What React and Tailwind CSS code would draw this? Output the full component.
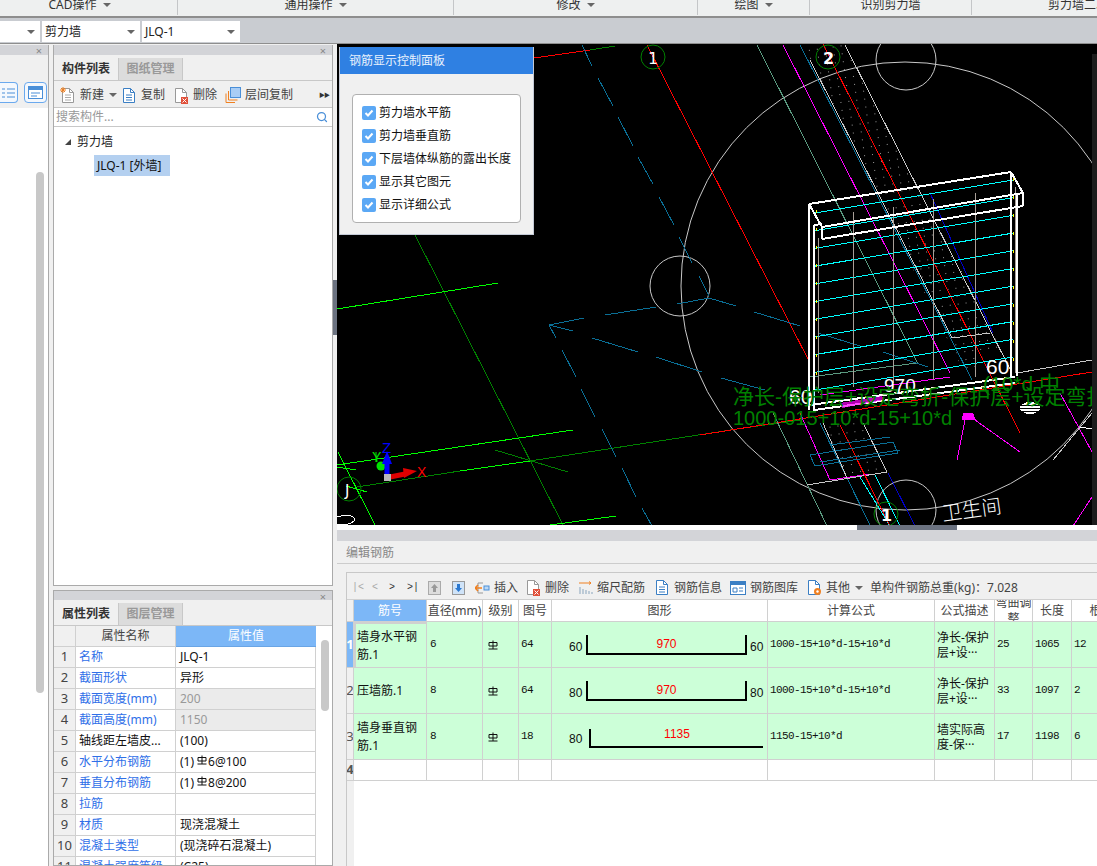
import React from "react";
import { Search } from "lucide-react";

const ribbon = [
  { label: "CAD操作", w: "w-[178px] pr-[18px]", caret: true },
  { label: "通用操作", w: "w-[276px]", caret: true },
  { label: "修改", w: "w-[244px]", caret: true },
  { label: "绘图", w: "w-[112px]", caret: true },
  { label: "识别剪力墙", w: "w-[162px]" },
  { label: "剪力墙二次编辑", w: "w-[236px]" },
];

const props = [
  ["名称", "JLQ-1"],
  ["截面形状", "异形"],
  ["截面宽度(mm)", "200", true],
  ["截面高度(mm)", "1150", true],
  ["轴线距左墙皮...", "(100)", false, true],
  ["水平分布钢筋", "6@100", false, false, true],
  ["垂直分布钢筋", "8@200", false, false, true],
  ["拉筋", ""],
  ["材质", "现浇混凝土"],
  ["混凝土类型", "(现浇碎石混凝土)"],
  ["混凝土强度等级", "(C25)"],
];

const checks = ["剪力墙水平筋", "剪力墙垂直筋", "下层墙体纵筋的露出长度", "显示其它图元", "显示详细公式"];

const tableCols = "grid grid-cols-[7px_73px_56px_36px_33px_216px_167px_60px_38px_39px_60px]";
const monoText = "font-[family-name:'Liberation_Mono','Noto_Sans_CJK_SC',monospace] text-[11px] tracking-[-0.6px]";
const cell = "border-r border-b border-[#d0d0d0] flex items-center overflow-hidden";

const rows = [
  { no: 1, name: <>墙身水平钢<br />筋.1</>, d: "6", fig: "64", l: "60", r: "60", mid: "970", formula: "1000-15+10*d-15+10*d", desc: <>净长-保护<br />层+设···</>, adj: "25", len: "1065", n: "12" },
  { no: 2, name: "压墙筋.1", d: "8", fig: "64", l: "80", r: "80", mid: "970", formula: "1000-15+10*d-15+10*d", desc: <>净长-保护<br />层+设···</>, adj: "33", len: "1097", n: "2" },
  { no: 3, name: <>墙身垂直钢<br />筋.1</>, d: "8", fig: "18", l: "80", mid: "1135", formula: "1150-15+10*d", desc: <>墙实际高<br />度-保···</>, adj: "17", len: "1198", n: "6" },
];

// canvas lines in page coordinates, [x1, y1, x2, y2, colour]
const lines = [
  [534, 58, 590, 50, "#ff0000"], [590, 50, 615, 46, "#008000"], [647, 45, 810, 363, "#ff0000"], [823, 44, 1020, 433, "#ff0000"],
  [415, 235, 563, 525, "#008000"], [337, 309, 498, 283, "#00ff00"], [337, 465, 573, 430, "#00ff00"],
  [357, 487, 460, 471, "#008000"], [460, 471, 530, 461, "#00ff00"], [530, 461, 737, 429, "#008000"], [737, 429, 800, 420, "#008000"],
  [700, 435, 1092, 372, "#ff0000"], [550, 525, 616, 516, "#00ff00"], [495, 450, 568, 472, "#008000"],
  [338, 452, 375, 525, "#00ff00"], [337, 467, 356, 470, "#00ff00"], [346, 486, 367, 492, "#00ff00"],
  [757, 45, 918, 364, "#5a9a80"], [810, 377, 917, 363, "#5a9a80"], [773, 413, 827, 526, "#5a9a80"],
  [783, 45, 950, 373, "#ff00ff"], [820, 395, 950, 377, "#ff00ff"],
  [800, 413, 830, 480, "#ff00ff"], [830, 480, 870, 474, "#ff00ff"], [800, 45, 972, 380, "#0a6f96"], [820, 423, 870, 525, "#0a6f96"],
  [810, 60, 952, 338, "#c8c8c8"], [952, 338, 990, 333, "#c8c8c8"], [845, 45, 1012, 373, "#c8c8c8"], [930, 193, 993, 333, "#0000c8"],
  [823, 423, 847, 478, "#c8c8c8"], [863, 423, 887, 472, "#c8c8c8"], [807, 485, 887, 472, "#c8c8c8"],
  [860, 477, 890, 526, "#00ffff"], [875, 475, 900, 526, "#00ffff"], [888, 473, 915, 526, "#0000c8"],
  [840, 425, 890, 526, "#ff0000"],
  [965, 420, 957, 460, "#ff00ff"], [975, 420, 1020, 452, "#ff00ff"], [1060, 393, 1092, 452, "#ff00ff"], [1092, 497, 1073, 526, "#ff00ff"],
  [1017, 373, 1092, 360, "#c8c8c8"], [1053, 460, 1092, 413, "#c8c8c8"], [1080, 427, 1092, 429, "#ffffff"],
  [810, 455, 893, 442, "#0a6f96"], [893, 442, 898, 453, "#0a6f96"], [898, 453, 815, 466, "#0a6f96"], [815, 466, 810, 455, "#0a6f96"],
  [820, 462, 900, 450, "#0a6f96"], [830, 445, 890, 437, "#0a6f96"],
];

const tealDashes = [
  [582, 45, 592, 66], [598, 78, 613, 106], [618, 117, 633, 146], [638, 157, 653, 184], [659, 197, 674, 225], [679, 237, 692, 263], [699, 276, 709, 296],
  [549, 325, 556, 338], [562, 350, 576, 377], [581, 389, 595, 417], [602, 429, 616, 457], [622, 468, 636, 497], [642, 508, 652, 526],
  [549, 325, 584, 318], [605, 315, 656, 307], [677, 304, 709, 298],
  [549, 325, 573, 331], [592, 338, 638, 352], [656, 357, 702, 372], [721, 378, 765, 390], [709, 298, 736, 306], [754, 312, 800, 326], [818, 333, 863, 347], [883, 352, 928, 367],
];

const wallTop = [
  [809, 204, 1011, 172], [809, 204, 822, 227], [1011, 172, 1023, 193], [822, 227, 1023, 193], [822, 227, 822, 239], [822, 239, 1023, 206], [1023, 193, 1023, 206],
  [814, 225, 822, 224], [809, 204, 809, 410], [814, 225, 814, 412], [1011, 172, 1011, 378], [1017, 193, 1017, 376],
  [810, 405, 1015, 377], [814, 410, 1015, 383],
];

const rebarV = [[818, 238, 393], [853, 212, 387], [893, 207, 383], [933, 199, 380], [975, 193, 377], [1015, 187, 373]];

const Caret = () => <span className="inline-block w-0 h-0 border-x-[4px] border-x-transparent border-t-[4px] border-t-[#666]" />;

const RebarMark = () => (
  <svg width="10" height="10" viewBox="0 0 10 10" className="inline-block">
    <path d="M1 2.500h8v3.500h-8zM5 0.500v8.500M0.500 9h9" fill="none" stroke="#111" strokeWidth="1" />
  </svg>
);

const DocIcon = ({ children, stroke = "#3b7fc4" }) => (
  <svg width="16" height="17" viewBox="0 0 16 17" className="shrink-0">
    <path d="M2.500 1.500h7l4 4v10h-11z" fill="#fff" stroke={stroke} />
    <path d="M9.500 1.500v4h4" fill="none" stroke={stroke} />
    {children}
  </svg>
);

const DocLines = ({ color = "#3b7fc4" }) => <path d="M5 8h6M5 10.500h6M5 13h6" stroke={color} />;

const RedX = () => (
  <g>
    <rect x="8" y="10" width="7" height="7" fill="#e0503a" />
    <path d="M9.500 11.500l4 4M13.500 11.500l-4 4" stroke="#fff" />
  </g>
);

const PanelTitle = () => (
  <div className="h-[10px] bg-[#d3d4d8] flex items-center justify-end pr-[6px] shrink-0">
    <span className="text-[#888] text-[11px] leading-none">×</span>
  </div>
);

const PanelTabs = ({ active, other }) => (
  <div className="h-[23px] mt-[3px] flex border-b border-[#c8c8c8] shrink-0">
    <div className="w-[65px] flex items-center justify-center font-bold text-[#333] border-r border-[#c8c8c8]">{active}</div>
    <div className="w-[64px] flex items-center justify-center font-bold text-[#999] bg-[#dcdcdc] border-r border-[#c8c8c8]">{other}</div>
  </div>
);

const ToolItem = ({ icon, label, caret, className = "" }) => (
  <div className={`flex items-center gap-[4px] text-[#444] ${className}`}>
    {icon}
    <span>{label}</span>
    {caret && <span className="ml-[1px] flex"><Caret /></span>}
  </div>
);

const Drawing = () => (
  <svg viewBox="337 44 760 481" className="block w-full h-full" shapeRendering="crispEdges">
    <defs>
      <pattern id="dots" width="8" height="8" patternUnits="userSpaceOnUse" patternTransform="rotate(-8)">
        <rect x="2" y="2" width="1" height="1" fill="#9a9a9a" />
      </pattern>
    </defs>
    <path d="M802 45H845L1000 345L965 375ZM823 423H863L887 472L847 478Z" fill="url(#dots)" />
    <g fill="none" stroke="#c8c8c8" shapeRendering="auto">
      <circle cx="905" cy="286" r="224" />
      <circle cx="680" cy="286" r="30" />
      <circle cx="906" cy="60" r="30" />
      <circle cx="906" cy="510" r="30" />
    </g>
    {lines.map(([x1, y1, x2, y2, c], i) => (
      <line key={i} x1={x1} y1={y1} x2={x2} y2={y2} stroke={c} strokeWidth="1" />
    ))}
    {tealDashes.map(([x1, y1, x2, y2], i) => (
      <line key={i} x1={x1} y1={y1} x2={x2} y2={y2} stroke="#0a6f96" strokeWidth="1" />
    ))}
    {Array.from({ length: 11 }, (_, i) => (
      <line key={i} x1="815" y1={213 + i * 17.7} x2="1013" y2={180 + i * 17.7} stroke="#00ffff" strokeWidth="1" />
    ))}
    {rebarV.map(([x, y1, y2]) => (
      <line key={x} x1={x} y1={y1} x2={x} y2={y2} stroke="#a89f98" strokeWidth="1" />
    ))}
    <line x1="816" y1="210" x2="816" y2="385" stroke="#ffff00" strokeDasharray="3 15" />
    <line x1="1013" y1="178" x2="1013" y2="375" stroke="#ffff00" strokeDasharray="3 15" />
    {wallTop.map(([x1, y1, x2, y2], i) => (
      <line key={i} x1={x1} y1={y1} x2={x2} y2={y2} stroke="#fff" strokeWidth="2" />
    ))}
    <path d="M963 413L973 413L976 420L962 420Z" fill="#ff00ff" />
    <path d="M840 403L882 396L884 400L842 408Z" fill="#ff00ff" opacity="0.7" />
    <ellipse cx="1030" cy="408" rx="10" ry="6" fill="#fff" />
    <path d="M1021 405H1039M1020 408H1040M1022 411H1038" stroke="#000" />
    <g fill="none" stroke="#008000" shapeRendering="auto">
      <circle cx="653" cy="57" r="12" />
      <circle cx="828" cy="57" r="12" />
      <circle cx="886" cy="514" r="12" />
      <circle cx="349" cy="489" r="12" />
    </g>
    <path d="M337 517C350 513 356 517 354 521C350 525 342 525 337 525" fill="none" stroke="#fff" />
    <g fontFamily="'DejaVu Sans', sans-serif" fill="#fff" shapeRendering="auto">
      <text x="648" y="64" fontSize="16">1</text>
      <text x="823" y="64" fontSize="16" fontWeight="bold">2</text>
      <text x="881" y="521" fontSize="16" fontWeight="bold">1</text>
      <text x="345" y="496" fontSize="15">J</text>
      <text x="884" y="392" fontSize="19" fontFamily="'Liberation Sans', sans-serif">970</text>
      <text x="986" y="374" fontSize="21" fontFamily="'Liberation Sans', sans-serif">60</text>
      <text x="789" y="404" fontSize="21" fontFamily="'Liberation Sans', sans-serif">60</text>
      <text x="0" y="0" fontSize="20" fontFamily="'Noto Sans CJK SC', sans-serif" fontWeight="300" transform="translate(943 521) rotate(-8)">卫生间</text>
    </g>
    <g fill="#008000" shapeRendering="auto" fontFamily="'Liberation Sans', 'Noto Sans CJK SC', sans-serif">
      <text x="733" y="404" fontSize="21">净长-保护层+设定弯折-保护层+设定弯折</text>
      <text x="733" y="425" fontSize="20">1000-015+10*d-15+10*d</text>
      <text x="983" y="391" fontSize="21">(10*d 中</text>
    </g>
    <g shapeRendering="auto">
      <circle cx="381" cy="466" r="4.500" fill="#00e000" />
      <path d="M376 462V452" stroke="#00e000" />
      <path d="M387 477V460" stroke="#0000ff" strokeWidth="5" />
      <path d="M382 464L387 451L392 464Z" fill="#0000ff" />
      <path d="M390 477L405 474" stroke="#e00000" strokeWidth="5" />
      <path d="M403 468L417 471L404 478Z" fill="#e00000" />
      <rect x="384" y="474" width="7" height="7" fill="#b8b8b8" />
      <text x="382" y="453" fontSize="15" fill="#0000ff" fontFamily="'Liberation Sans', sans-serif">Z</text>
      <text x="372" y="462" fontSize="14" fill="#00e000" fontFamily="'Liberation Sans', sans-serif">Y</text>
      <text x="417" y="477" fontSize="14" fill="#ff0000" fontFamily="'Liberation Sans', sans-serif">X</text>
    </g>
  </svg>
);

const ControlPanel = () => (
  <div className="absolute left-[2px] top-[3px] w-[195px] h-[188px] bg-[#f0f0f0] border-b border-x border-[#c4cad6]">
    <div className="h-[27px] bg-[#2f80e2] text-[#e8f1fd] flex items-center pl-[9px]">钢筋显示控制面板</div>
    <div className="mt-[20px] mx-[12px] h-[129px] bg-white border border-[#b0b0b0] rounded-[4px] pl-[9px] pt-[9px] flex flex-col gap-[5px]">
      {checks.map((c) => (
        <div key={c} className="flex items-center gap-[3px] h-[18px] text-[#111]">
          <span className="w-[14px] h-[14px] rounded-[2px] bg-[#5ba8f5] flex items-center justify-center">
            <svg width="10" height="10" viewBox="0 0 10 10">
              <path d="M1.500 5l2.500 2.500 4.500-5" fill="none" stroke="#fff" strokeWidth="2" />
            </svg>
          </span>
          <span>{c}</span>
        </div>
      ))}
    </div>
  </div>
);

const Shape = ({ row }) => (
  <div className="flex items-center w-full h-full relative">
    <span className="absolute left-[17px] top-[16px] text-[12px] font-[family-name:'Liberation_Sans',sans-serif] text-[#111]">{row.l}</span>
    {row.r ? (
      <>
        <div className="absolute left-[34px] top-[13px] w-[161px] h-[20px] border-x-[2px] border-b-[2px] border-black text-center text-[12px] leading-[18px] text-[#f00] font-[family-name:'Liberation_Sans',sans-serif]">{row.mid}</div>
        <span className="absolute left-[198px] top-[16px] text-[12px] font-[family-name:'Liberation_Sans',sans-serif] text-[#111]">{row.r}</span>
      </>
    ) : (
      <div className="absolute left-[37px] top-[15px] w-[174px] h-[19px] border-l-[2px] border-b-[2px] border-black text-center text-[12px] leading-[10px] text-[#f00] font-[family-name:'Liberation_Sans',sans-serif]">{row.mid}</div>
    )}
  </div>
);

const HeaderCell = ({ children, className = "" }) => (
  <div className={`${cell} justify-center text-[#444] leading-[16px] text-center ${className}`}>{children}</div>
);

const Table = () => (
  <div className="flex-1 min-w-0 overflow-hidden">
    <div className={`${tableCols} h-[22px]`}>
      <div className="bg-[#f0f0f0] border-r border-b border-[#d0d0d0]" />
      <HeaderCell className="bg-[#7cb7f7] !text-white">筋号</HeaderCell>
      <HeaderCell>直径(mm)</HeaderCell>
      <HeaderCell>级别</HeaderCell>
      <HeaderCell>图号</HeaderCell>
      <HeaderCell>图形</HeaderCell>
      <HeaderCell>计算公式</HeaderCell>
      <HeaderCell>公式描述</HeaderCell>
      <HeaderCell>弯曲调整</HeaderCell>
      <HeaderCell>长度</HeaderCell>
      <HeaderCell>根数</HeaderCell>
    </div>
    {rows.map((r) => (
      <div key={r.no} className={`${tableCols} h-[46px] text-[#111]`}>
        <div className={`${cell} justify-center text-[13px] font-bold ${r.no === 1 ? "bg-[#7cb7f7] text-white" : "bg-[#f0f0f0] text-[#555] font-normal"}`}>{r.no}</div>
        <div className={`${cell} bg-[#ccffd8] leading-[18px] ${r.no === 1 ? "border-2 border-[#808080] pl-[1px]" : "pl-[3px]"}`}><span>{r.name}</span></div>
        <div className={`${cell} bg-[#ccffd8] pl-[3px] ${monoText}`}>{r.d}</div>
        <div className={`${cell} bg-[#ccffd8] pl-[5px]`}><RebarMark /></div>
        <div className={`${cell} bg-[#ccffd8] pl-[2px] ${monoText}`}>{r.fig}</div>
        <div className={`${cell} bg-[#ccffd8]`}><Shape row={r} /></div>
        <div className={`${cell} bg-[#ccffd8] pl-[2px] ${monoText}`}>{r.formula}</div>
        <div className={`${cell} bg-[#ccffd8] pl-[2px] leading-[15px]`}><span>{r.desc}</span></div>
        <div className={`${cell} bg-[#ccffd8] pl-[2px] ${monoText}`}>{r.adj}</div>
        <div className={`${cell} bg-[#ccffd8] pl-[2px] ${monoText}`}>{r.len}</div>
        <div className={`${cell} bg-[#ccffd8] pl-[2px] ${monoText}`}>{r.n}</div>
      </div>
    ))}
    <div className={`${tableCols} h-[21px]`}>
      <div className={`${cell} justify-center text-[13px] font-bold bg-[#f0f0f0] text-[#555]`}>4</div>
      {Array.from({ length: 10 }, (_, i) => <div key={i} className={cell} />)}
    </div>
    <div className="w-[7px] h-[100px] bg-[#f0f0f0]" />
  </div>
);

export default function App() {
  return (
    <div className="w-[1097px] h-[866px] flex flex-col overflow-hidden bg-[#f0f0f0] text-[12px] font-[family-name:'Noto_Sans','Noto_Sans_CJK_SC',sans-serif]">
      {/* ribbon */}
      <div className="h-[18px] shrink-0 flex overflow-hidden bg-[#eef0f0] border-b-2 border-[#8e8e8e]">
        {ribbon.map((r) => (
          <div key={r.label} className={`${r.w} shrink-0 h-[15px] border-r border-[#c4c6c8] flex items-start justify-center gap-[6px] text-[#333] last:border-r-0`}>
            <span className="leading-[10px] whitespace-nowrap">{r.label}</span>
            {r.caret && <span className="mt-[3px] flex"><Caret /></span>}
          </div>
        ))}
      </div>
      {/* combo bar */}
      <div className="h-[26px] shrink-0 bg-[#c9ccd1] border-b border-[#8e8e8e] flex items-start pt-[3px] gap-[2px]">
        {[["", "w-[40px]"], ["剪力墙", "w-[98px]"], ["JLQ-1", "w-[98px]"]].map(([t, w]) => (
          <div key={w + t} className={`${w} h-[21px] bg-white flex items-center justify-between pl-[3px] pr-[5px] text-[#222]`}>
            <span>{t}</span>
            <Caret />
          </div>
        ))}
      </div>
      <div className="flex flex-1 min-h-0">
        {/* left panels */}
        <div className="w-[337px] shrink-0 flex pt-px">
          <div className="w-[49px] shrink-0 border-r border-[#aaa] bg-white flex flex-col">
            <PanelTitle />
            <div className="h-[53px] bg-[#f0f0f0] flex items-end pb-[5px] gap-[6px] shrink-0">
              <div className="w-[18px] h-[21px] rounded-r-[4px] border border-l-0 border-[#6aa9ee] bg-[#f4f8fd] flex items-center justify-center">
                <svg width="14" height="12" viewBox="0 0 14 12"><path d="M0 2h3M5 2h8M0 6h3M5 6h8M0 10h3M5 10h8" stroke="#4a8fd8" /></svg>
              </div>
              <div className="w-[23px] h-[21px] rounded-[4px] border border-[#6aa9ee] bg-[#f4f8fd] flex items-center justify-center">
                <svg width="15" height="13" viewBox="0 0 15 13"><rect x="0.500" y="0.500" width="14" height="12" fill="#fff" stroke="#4a8fd8" /><rect x="1" y="1" width="13" height="3" fill="#4a8fd8" /><path d="M3 7h9M3 10h6" stroke="#4a8fd8" /></svg>
              </div>
            </div>
            <div className="flex-1 flex justify-end pr-[4px] pt-[64px]">
              <div className="w-[8px] h-[521px] rounded-[4px] bg-[#c8c8c8]" />
            </div>
          </div>
          <div className="w-[4px] shrink-0" />
          <div className="w-[280px] shrink-0 flex flex-col">
            {/* component list */}
            <div className="h-[541px] shrink-0 border border-[#aaa] border-t-0 flex flex-col bg-white">
              <PanelTitle />
              <div className="bg-[#f0f0f0]"><PanelTabs active="构件列表" other="图纸管理" /></div>
              <div className="h-[27px] pt-[2px] bg-[#f0f0f0] border-b border-[#c8c8c8] flex items-center pl-[6px] gap-[8px] relative shrink-0">
                <ToolItem label="新建" caret icon={<DocIcon stroke="#999"><path d="M1 1l4 4M5 1l-4 4M3 0v6M0 3h6" stroke="#f08020" /><path d="M5 8h6M5 10.500h6M5 13h6" stroke="#aaa" /></DocIcon>} className="mr-[-4px]" />
                <ToolItem label="复制" icon={<DocIcon><DocLines /></DocIcon>} />
                <ToolItem label="删除" icon={<DocIcon stroke="#999"><RedX /></DocIcon>} />
                <ToolItem label="层间复制" icon={
                  <svg width="16" height="16" viewBox="0 0 16 16" className="shrink-0">
                    <path d="M1 6.500v9h9M3.500 4v9h9" fill="none" stroke="#f08020" />
                    <rect x="5.500" y="0.500" width="10" height="10" fill="#a9cdf5" stroke="#4a8fd8" />
                  </svg>
                } />
                <span className="absolute right-[3px] text-[#333] text-[6px] tracking-[-1px]">▶▶</span>
              </div>
              <div className="h-[19px] border-b border-[#c8c8c8] flex items-center justify-between px-[2px] text-[#999] shrink-0">
                <span>搜索构件...</span>
                <Search size={12} strokeWidth={2.5} className="text-[#4a8fd8] mr-[2px]" />
              </div>
              <div className="pt-[6px]">
                <div className="h-[18px] flex items-center text-[#222]">
                  <span className="ml-[11px] mr-[6px] w-0 h-0 border-l-[6px] border-l-transparent border-b-[6px] border-b-[#444]" />
                  <span>剪力墙</span>
                </div>
                <div className="ml-[40px] mt-[4px] w-[76px] h-[21px] bg-[#b4d0f0] flex items-center pl-[3px] text-[#111] whitespace-nowrap">JLQ-1 [外墙]</div>
              </div>
            </div>
            <div className="h-[4px] shrink-0" />
            {/* properties */}
            <div className="flex-1 min-h-0 border border-[#aaa] flex flex-col bg-white overflow-hidden">
              <PanelTitle />
              <div className="bg-[#f0f0f0] -mt-px"><PanelTabs active="属性列表" other="图层管理" /></div>
              <div className="flex flex-1 min-h-0 overflow-hidden">
                <div className="w-[262px] shrink-0">
                  <div className="grid grid-cols-[22px_100px_140px] h-[21px]">
                    <div className="bg-[#f0f0f0] border-r border-b border-[#d0d0d0]" />
                    <div className="bg-[#f0f0f0] border-r border-b border-[#d0d0d0] flex items-center justify-center text-[#444]">属性名称</div>
                    <div className="bg-[#7cb7f7] border-b border-[#6aa5e5] flex items-center justify-center text-white">属性值</div>
                  </div>
                  {props.map(([name, value, dim, plain, bar], i) => (
                    <div key={name} className="grid grid-cols-[22px_100px_140px] h-[21px]">
                      <div className="bg-[#f0f0f0] border-r border-b border-[#d0d0d0] flex items-center justify-center text-[13px] text-[#444]">{i + 1}</div>
                      <div className={`border-r border-b border-[#d0d0d0] flex items-center pl-[3px] whitespace-nowrap overflow-hidden ${plain ? "text-[#111]" : "text-[#2f6fe8]"}`}>{name}</div>
                      <div className={`border-r border-b border-[#d0d0d0] flex items-center pl-[4px] whitespace-nowrap ${dim ? "bg-[#ebebeb] text-[#999]" : "text-[#111]"}`}>
                        {bar && <span className="mr-[3px]">(1)</span>}
                        {bar && <span className="-mt-[5px] mr-px flex"><RebarMark /></span>}
                        {value}
                      </div>
                    </div>
                  ))}
                </div>
                <div className="flex-1 pt-[14px] pl-[5px]">
                  <div className="w-[8px] h-[71px] rounded-[4px] bg-[#c8c8c8]" />
                </div>
              </div>
            </div>
          </div>
        </div>
        {/* canvas and rebar editor */}
        <div className="flex-1 min-w-0 flex flex-col relative">
          <div className="absolute -left-[4px] top-[236px] w-[4px] h-[55px] bg-[#6b7280] z-10" />
          <div className="h-[481px] shrink-0 bg-black relative overflow-hidden">
            <Drawing />
            <div className="absolute right-0 top-[10px] bottom-0 w-[5px] bg-[#1c1c1c]" />
            <ControlPanel />
          </div>
          <div className="h-[5px] shrink-0 bg-white flex justify-center relative">
            <div className="absolute left-[520px] w-[100px] h-[5px] bg-[#6b7280]" />
          </div>
          <div className="h-[11px] shrink-0 bg-[#d3d4d8]" />
          <div className="h-[23px] pt-[2px] shrink-0 bg-[#f0f0f0] border-b border-[#ccc] flex items-center pl-[9px] text-[#888]">编辑钢筋</div>
          <div className="flex flex-1 min-h-0 pt-[8px] bg-[#f0f0f0]">
            <div className="w-[9px] shrink-0" />
            <div className="flex-1 min-w-0 border-l border-t border-[#c8c8c8] flex flex-col bg-white">
              <div className="h-[27px] pt-[3px] shrink-0 bg-[#f0f0f0] flex items-center border-b border-[#d0d0d0] pl-[5px] text-[#444] whitespace-nowrap">
                <div className="flex items-center w-[76px] text-[10px] font-[family-name:'Liberation_Mono',monospace]">
                  <span className="w-[20px] text-[#a8a8a8]">|&lt;</span>
                  <span className="w-[17px] text-[#a8a8a8]">&lt;</span>
                  <span className="w-[18px] text-[#333]">&gt;</span>
                  <span className="text-[#333]">&gt;|</span>
                </div>
                <svg width="13" height="14" viewBox="0 0 13 14" className="shrink-0"><rect x="0.500" y="0.500" width="12" height="13" fill="#ddd" stroke="#aaa" /><path d="M6.500 3L10 7H8V11H5V7H3Z" fill="#999" /></svg>
                <svg width="13" height="14" viewBox="0 0 13 14" className="shrink-0 ml-[11px]"><rect x="0.500" y="0.500" width="12" height="13" fill="#cfe3f8" stroke="#999" /><path d="M6.500 11L10 7H8V3H5V7H3Z" fill="#2a78d0" /></svg>
                <ToolItem className="ml-[10px]" label="插入" icon={
                  <svg width="15" height="14" viewBox="0 0 15 14" className="shrink-0"><path d="M8 2H3V12H8" fill="none" stroke="#999" /><path d="M0 7H7M3 4L0 7L3 10" fill="none" stroke="#f08020" strokeWidth="1.500" /><rect x="9" y="5" width="5" height="4" fill="#bcd8f4" stroke="#4a8fd8" /></svg>
                } />
                <ToolItem className="ml-[7px]" label="删除" icon={<DocIcon stroke="#999"><RedX /></DocIcon>} />
                <ToolItem className="ml-[10px]" label="缩尺配筋" icon={
                  <svg width="14" height="14" viewBox="0 0 14 14" className="shrink-0"><path d="M0 2H12M10 0.500L12 2L10 3.500" fill="none" stroke="#f08020" /><path d="M1 6V13M4 8V13M7 9V13M10 10V13M13 11V13" stroke="#8aa5bd" /></svg>
                } />
                <ToolItem className="ml-[9px]" label="钢筋信息" icon={<DocIcon><DocLines /></DocIcon>} />
                <ToolItem className="ml-[8px]" label="钢筋图库" icon={
                  <svg width="16" height="14" viewBox="0 0 16 14" className="shrink-0"><rect x="0.500" y="0.500" width="15" height="13" fill="#fff" stroke="#3b7fc4" /><rect x="1" y="1" width="14" height="3" fill="#3b7fc4" /><path d="M3 7h4v4h-4zM9 7h4M9 10h4" fill="none" stroke="#3b7fc4" /></svg>
                } />
                <ToolItem className="ml-[8px]" label="其他" caret icon={
                  <DocIcon><circle cx="11.500" cy="12.500" r="3.500" fill="#f08020" /><circle cx="11.500" cy="12.500" r="1.200" fill="#fff" /></DocIcon>
                } />
                <span className="ml-[7px] text-[#444]">单构件钢筋总重(kg)：7.028</span>
              </div>
              <Table />
            </div>
          </div>
        </div>
      </div>
    </div>
  );
}
